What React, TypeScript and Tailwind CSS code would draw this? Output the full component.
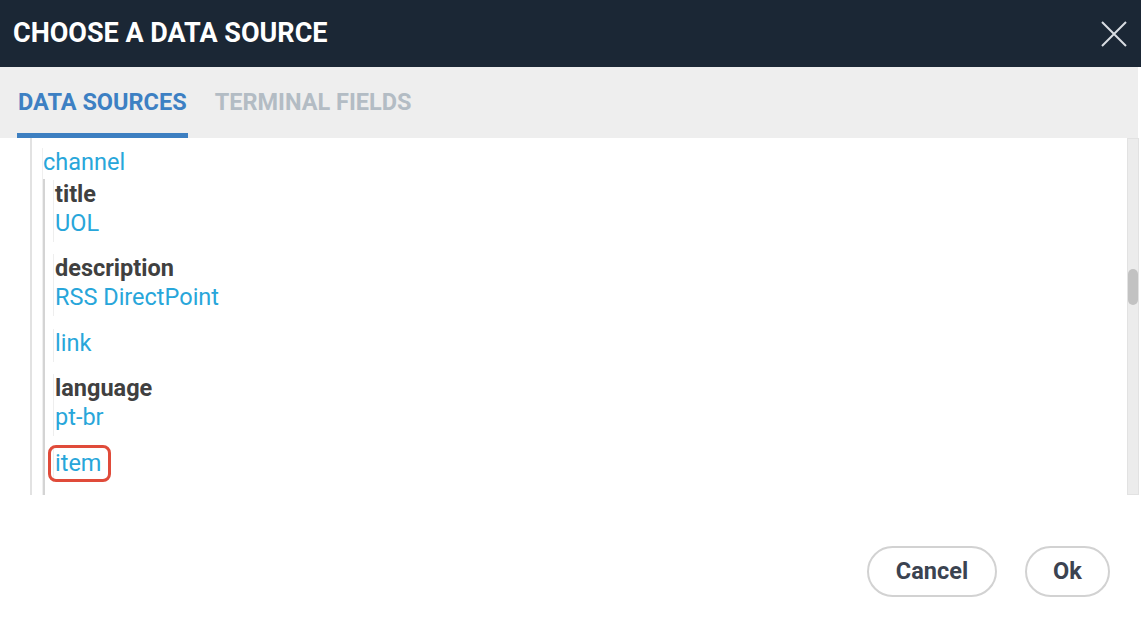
import React from "react";

type Field = { label?: string; value: string; marked?: boolean };

const fields: Field[] = [
  { label: "title", value: "UOL" },
  { label: "description", value: "RSS DirectPoint" },
  { value: "link" },
  { label: "language", value: "pt-br" },
  { value: "item", marked: true },
];

function CloseIcon() {
  return (
    <svg width="28" height="28" viewBox="0 0 28 28" fill="none">
      <path d="M2 2 L26 26 M26 2 L2 26" stroke="#d9dde2" strokeWidth="2" />
    </svg>
  );
}

export default function App() {
  return (
    <div
      className="w-[1141px] h-[622px] bg-white flex flex-col overflow-hidden"
      style={{ fontFamily: "Roboto, 'Liberation Sans', sans-serif" }}
    >
      {/* header */}
      <div className="h-[67px] bg-[#1b2735] flex items-center justify-between pl-[13px] pr-[13px] shrink-0">
        <h1 className="text-white font-bold text-[27px] leading-none">
          CHOOSE A DATA SOURCE
        </h1>
        <CloseIcon />
      </div>

      {/* tabs */}
      <div className="h-[71px] bg-[#eeeeee] mr-[3px] flex items-stretch pl-[17px] gap-[27px] shrink-0">
        <div className="flex items-center pt-[6px] px-[1px] border-b-[5px] border-[#3d7fc1] text-[#3d80c3] font-bold text-[23.5px]">
          DATA SOURCES
        </div>
        <div className="flex items-center pb-[5px] pt-[6px] text-[#b3bcc4] font-bold text-[23.5px]">
          TERMINAL FIELDS
        </div>
      </div>

      {/* tree */}
      <div className="h-[357px] flex shrink-0">
        <div className="flex-1 overflow-hidden">
          <div className="ml-[30px] h-full border-l-2 border-[#e2e2e2] pl-[10px] pt-[10px]">
            <div className="border-l border-[#efefef] h-full">
              <div className="text-[#28a6da] text-[23.5px] leading-[29px]">channel</div>
              <div className="mt-[2px] border-l-2 border-[#d4d4d4] pl-[8px] pt-[1px] h-full">
                {fields.map((f) => (
                  <div
                    key={f.value}
                    className="border-l border-[#eeeeee] pl-[1px] pb-[4px] mb-[12.4px] text-[23.5px] leading-[29px]"
                  >
                    {f.label && <div className="font-bold text-[#404040]">{f.label}</div>}
                    {f.marked ? (
                      <span className="relative inline-block text-[#28a6da]">
                        {f.value}
                        <span className="absolute left-[-7px] right-[-10px] top-[-4px] bottom-[-4px] border-[3px] border-[#e04b3a] rounded-[8px]" />
                      </span>
                    ) : (
                      <div className="text-[#28a6da]">{f.value}</div>
                    )}
                  </div>
                ))}
              </div>
            </div>
          </div>
        </div>
        {/* scrollbar */}
        <div className="w-[12px] mr-[2px] bg-[#ececec] border border-[#e2e2e2] relative">
          <div className="absolute left-0 right-0 top-[130px] h-[36px] bg-[#c2c2c2] rounded-[5px]" />
        </div>
      </div>

      {/* footer */}
      <div className="flex-1 flex justify-end items-start pt-[51px] pr-[31px] gap-[28px]">
        <button className="w-[130px] h-[51px] rounded-full border-2 border-[#d2d2d2] bg-white text-[#3b4351] font-bold text-[23.5px]">
          Cancel
        </button>
        <button className="w-[85px] h-[51px] rounded-full border-2 border-[#d2d2d2] bg-white text-[#3b4351] font-bold text-[23.5px]">
          Ok
        </button>
      </div>
    </div>
  );
}
